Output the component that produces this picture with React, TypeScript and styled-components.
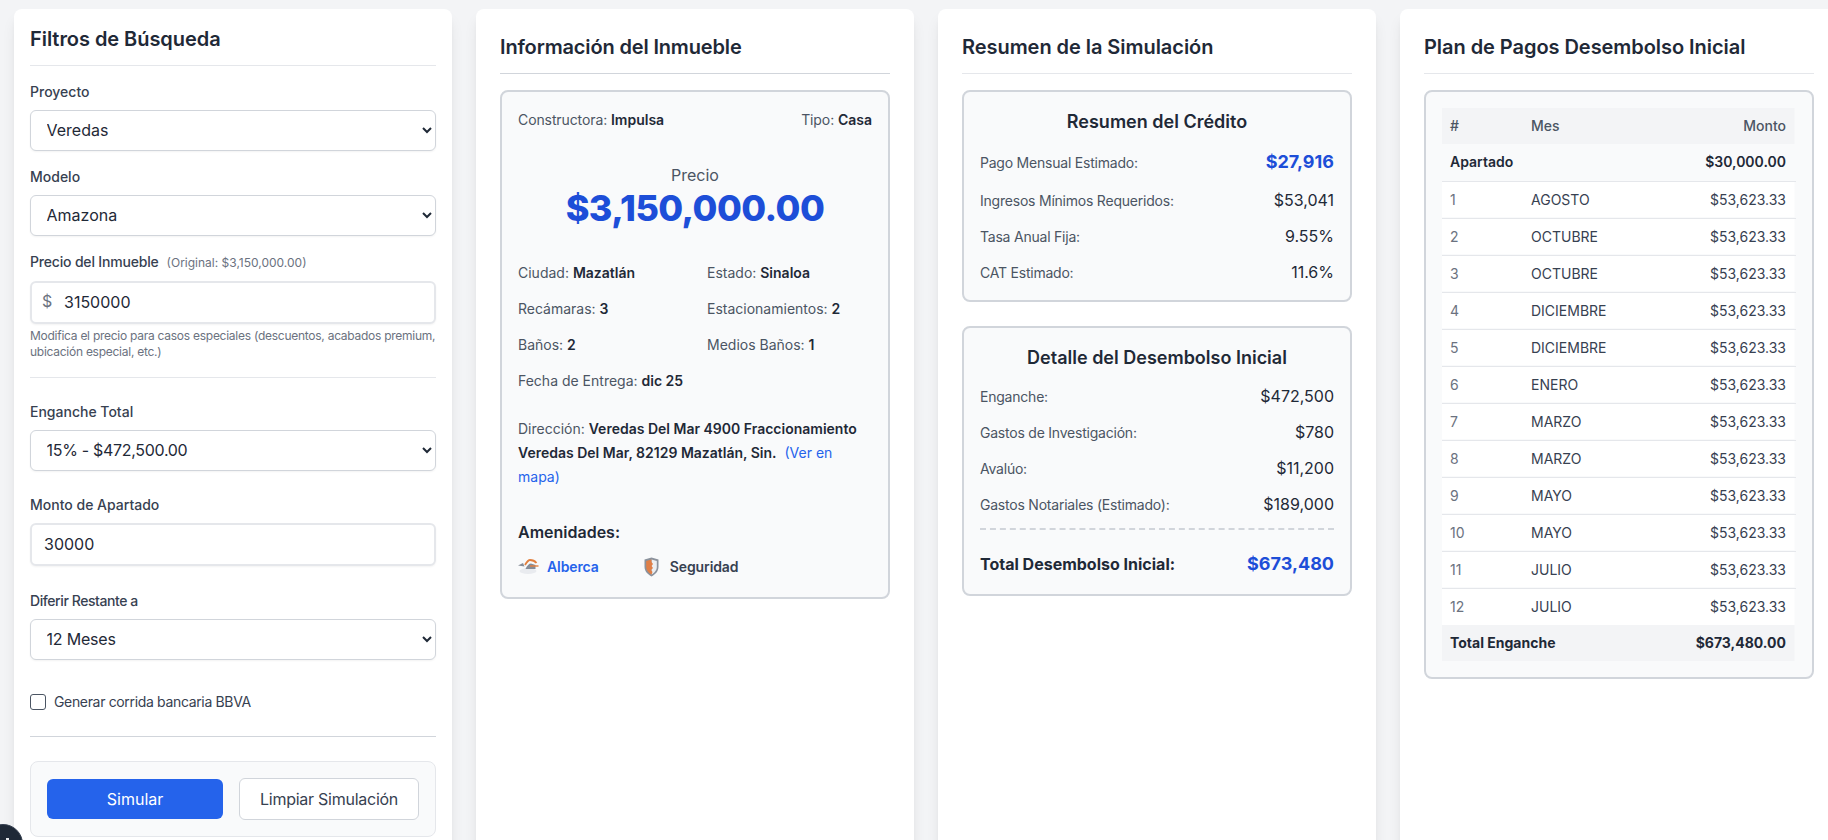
import { createGlobalStyle, styled } from "styled-components";

const GlobalStyle = createGlobalStyle`
  html, body {
    margin: 0;
    height: 100%;
    overflow: hidden;
    background: #f3f4f6;
    font-family: Inter, "Liberation Sans", sans-serif;
    color: #1f2937;
  }
  * {
    box-sizing: border-box;
  }
`;

const Page = styled.div`
  display: grid;
  grid-template-columns: repeat(4, 438px);
  gap: 24px;
  padding: 9px 0 0 14px;
`;

const Card = styled.section<{ $pad: number }>`
  background: #fff;
  border-radius: 8px;
  padding: ${(p) => p.$pad}px;
  box-shadow: 0 10px 15px -3px rgba(0, 0, 0, 0.1), 0 4px 6px -4px rgba(0, 0, 0, 0.1);
  height: 1000px;
`;

const CardTitle = styled.h2<{ $dark?: boolean; $track?: number }>`
  margin: 0 0 16px;
  font-size: 20px;
  line-height: 28px;
  font-weight: 600;
  letter-spacing: ${(p) => p.$track ?? -0.05}px;
  color: #1f2937;
  border-bottom: 1px solid ${(p) => (p.$dark ? "#d1d5db" : "#e5e7eb")};
  padding-bottom: 12px;
`;

const Field = styled.div<{ $mb: number }>`
  margin-bottom: ${(p) => p.$mb}px;
`;

const Label = styled.label<{ $track?: number }>`
  display: block;
  font-size: 14px;
  line-height: 20px;
  font-weight: 500;
  letter-spacing: ${(p) => p.$track ?? 0}px;
  color: #374151;
  margin-bottom: 8px;
`;

const LabelNote = styled.span`
  font-size: 12px;
  font-weight: 400;
  letter-spacing: 0;
  color: #6b7280;
  margin-left: 8px;
`;

const Select = styled.select<{ $track?: number }>`
  display: block;
  width: 100%;
  height: 41px;
  padding: 0 11.5px 1px;
  font-family: inherit;
  font-size: 16px;
  letter-spacing: ${(p) => p.$track ?? 0}px;
  color: #1f2937;
  background: #fff;
  border: 1px solid #d1d5db;
  border-radius: 6px;
  box-shadow: 0 1px 2px rgba(0, 0, 0, 0.05);
`;

const InputWrap = styled.div`
  position: relative;
`;

const Prefix = styled.span`
  position: absolute;
  left: 12px;
  top: 10px;
  font-size: 16px;
  line-height: 20px;
  color: #6b7280;
`;

const Input = styled.input<{ $hasPrefix?: boolean }>`
  display: block;
  width: 100%;
  height: 43px;
  padding: 0 12px 2px ${(p) => (p.$hasPrefix ? "32px" : "12px")};
  font-family: inherit;
  font-size: 16px;
  color: #1f2937;
  background: #fff;
  border: 2px solid #e5e7eb;
  border-radius: 6px;
  box-shadow: 0 1px 2px rgba(0, 0, 0, 0.05);
`;

const Help = styled.p`
  margin: 4px 0 0;
  font-size: 12px;
  line-height: 16px;
  letter-spacing: -0.26px;
  color: #6b7280;
`;

const Divider = styled.hr<{ $mt: number; $mb: number; $dark?: boolean }>`
  border: 0;
  border-top: 1px solid ${(p) => (p.$dark ? "#d1d5db" : "#e5e7eb")};
  margin: ${(p) => p.$mt}px 0 ${(p) => p.$mb}px;
`;

const CheckRow = styled.label`
  display: flex;
  align-items: center;
  gap: 8px;
  font-size: 14px;
  line-height: 20px;
  letter-spacing: -0.34px;
  color: #374151;
`;

const Checkbox = styled.span`
  width: 16px;
  height: 16px;
  border: 1px solid #4b5563;
  border-radius: 3px;
  background: #fff;
`;

const ActionBox = styled.div`
  display: flex;
  align-items: center;
  gap: 16px;
  background: #f9fafb;
  border: 1px solid #e5e7eb;
  border-radius: 8px;
  padding: 16px;
`;

const PrimaryButton = styled.button`
  flex: 177 1 0;
  height: 40px;
  border: 0;
  border-radius: 6px;
  background: #2563eb;
  color: #fff;
  font-family: inherit;
  font-size: 16px;
  font-weight: 400;
`;

const GhostButton = styled.button`
  flex: 179 1 0;
  height: 42px;
  border: 1px solid #d1d5db;
  border-radius: 6px;
  background: #fff;
  color: #374151;
  font-family: inherit;
  font-size: 16px;
  font-weight: 400;
  letter-spacing: -0.26px;
`;

const Panel = styled.div<{ $mb?: number }>`
  background: #f9fafb;
  border: 2px solid #d1d5db;
  border-radius: 8px;
  padding: 16px;
  margin-bottom: ${(p) => p.$mb ?? 0}px;
`;

const TopRow = styled.div`
  display: flex;
  justify-content: space-between;
  font-size: 14px;
  line-height: 24px;
  letter-spacing: -0.1px;
  color: #4b5563;
  margin-bottom: 31px;
`;

const Strong = styled.strong`
  font-weight: 600;
  letter-spacing: 0;
  color: #1f2937;
`;

const PriceBlock = styled.div`
  text-align: center;
  margin-bottom: 35px;
`;

const PriceLabel = styled.div`
  font-size: 16px;
  line-height: 24px;
  color: #4b5563;
  margin-bottom: 1px;
`;

const PriceValue = styled.div`
  font-size: 36px;
  line-height: 40px;
  font-weight: 800;
  letter-spacing: -0.55px;
  color: #1d4ed8;
`;

const InfoGrid = styled.div`
  display: grid;
  grid-template-columns: 1fr 1fr;
  gap: 16px 24px;
  font-size: 14px;
  line-height: 20px;
  color: #4b5563;
  margin-bottom: 26px;
`;

const FullCell = styled.div`
  grid-column: 1 / -1;
`;

const Address = styled.p`
  margin: 0 0 31px;
  font-size: 14px;
  line-height: 24px;
  color: #4b5563;
`;

const MapLink = styled.a`
  color: #2563eb;
  margin-left: 4px;
`;

const AmenitiesTitle = styled.h4`
  margin: 0 0 8px;
  font-size: 16px;
  line-height: 24px;
  font-weight: 600;
  color: #1f2937;
`;

const Amenities = styled.div`
  display: flex;
  align-items: center;
  gap: 45px;
  height: 29px;
`;

const Amenity = styled.div<{ $link?: boolean }>`
  display: flex;
  align-items: center;
  gap: ${(p) => (p.$link ? 8 : 11)}px;
  font-size: 14px;
  line-height: 20px;
  font-weight: 600;
  letter-spacing: -0.1px;
  color: ${(p) => (p.$link ? "#2563eb" : "#374151")};
`;

const PanelTitle = styled.h3`
  margin: 0 0 12px;
  text-align: center;
  font-size: 18px;
  line-height: 28px;
  font-weight: 600;
  color: #1f2937;
`;

const RowList = styled.div`
  display: flex;
  flex-direction: column;
  gap: 12px;
`;

const SummaryRow = styled.div`
  display: flex;
  justify-content: space-between;
  align-items: center;
  font-size: 14px;
  letter-spacing: -0.22px;
  color: #4b5563;
`;

const SummaryValue = styled.span<{ $blue?: boolean }>`
  font-size: ${(p) => (p.$blue ? "18px" : "16px")};
  line-height: ${(p) => (p.$blue ? "28px" : "24px")};
  font-weight: ${(p) => (p.$blue ? 700 : 400)};
  letter-spacing: 0;
  color: ${(p) => (p.$blue ? "#1d4ed8" : "#1f2937")};
`;

const Dashed = styled.div`
  border-top: 2px dashed #d1d5db;
  margin: 12px 0 20px;
`;

const TotalRow = styled.div`
  display: flex;
  justify-content: space-between;
  align-items: center;
  font-size: 16px;
  line-height: 28px;
  font-weight: 700;
  color: #1f2937;
`;

const TotalValue = styled.span`
  font-size: 18px;
  color: #1d4ed8;
`;

const Table = styled.table`
  width: 354px;
  border-collapse: collapse;
  font-size: 14px;
  line-height: 20px;
  table-layout: fixed;
`;

const fill = (color: string) =>
  `background: linear-gradient(${color}, ${color}) left top / 352px 100% no-repeat;`;

const HeadRow = styled.tr`
  ${fill("#f3f4f6")}
`;

const Th = styled.th<{ $w?: number; $right?: boolean }>`
  width: ${(p) => (p.$w ? `${p.$w}px` : "auto")};
  height: 36px;
  padding: 0 ${(p) => (p.$right ? "10px" : "8px")} 0 8px;
  text-align: ${(p) => (p.$right ? "right" : "left")};
  font-weight: 500;
  color: #4b5563;
`;

const DepositRow = styled.tr`
  border-bottom: 1px solid #e5e7eb;
  font-weight: 600;
  color: #1f2937;
`;

const MonthRow = styled.tr<{ $last?: boolean }>`
  border-bottom: ${(p) => (p.$last ? "0" : "1px solid #e5e7eb")};
  ${fill("#fff")}
  color: #374151;
`;

const Td = styled.td<{ $right?: boolean; $muted?: boolean }>`
  height: 37px;
  padding: 0 ${(p) => (p.$right ? "10px" : "8px")} 0 8px;
  text-align: ${(p) => (p.$right ? "right" : "left")};
  color: ${(p) => (p.$muted ? "#6b7280" : "inherit")};
`;

const FootRow = styled.tr`
  ${fill("#f3f4f6")}
  font-weight: 700;
  color: #1f2937;
  td {
    height: 36px;
  }
`;

const DevBadge = styled.div`
  position: fixed;
  left: -17px;
  bottom: -24px;
  width: 40px;
  height: 40px;
  border-radius: 50%;
  background: #1f2937;
  border: 1px solid #374151;
  &::after {
    content: "";
    position: absolute;
    left: 22px;
    top: 13px;
    width: 3px;
    height: 6px;
    background: #e5e7eb;
  }
`;

const PoolIcon = () => (
  <svg width="21" height="16" viewBox="0 0 21 16" aria-hidden="true">
    <ellipse cx="10" cy="12" rx="8.5" ry="3" fill="#e9ebef" />
    <path d="M0 6.5 L5 4 L6.5 7.5 Z" fill="#868d98" />
    <path d="M7 6 Q10 1 12 1 Q16 1 18.5 4" fill="none" stroke="#e2803f" strokeWidth="1.8" />
    <path d="M7.5 10 Q10 4.5 13 4.5 L17.5 6 L17.5 10 Z" fill="#868d98" />
    <path d="M12 7 H20.5" stroke="#e2803f" strokeWidth="1.4" />
  </svg>
);

const ShieldIcon = () => (
  <svg width="15" height="20" viewBox="0 0 15 20" aria-hidden="true">
    <path d="M7.5 0.5 L14.5 2.5 V10 C14.5 14.5 11 17.5 7.5 19.5 C4 17.5 0.5 14.5 0.5 10 V2.5 Z" fill="#8b929c" />
    <path d="M7.5 2.5 L12.8 4 V10 C12.8 13.5 10 16 7.5 17.5 Z" fill="#eceef1" />
    <path d="M7.5 2.5 L2.2 4 V10 C2.2 13.5 5 16 7.5 17.5 L8.5 15 L7 13 L9 11 L7.5 9 L9 7 L7.5 5 Z" fill="#e07f47" />
  </svg>
);

const months = [
  "AGOSTO",
  "OCTUBRE",
  "OCTUBRE",
  "DICIEMBRE",
  "DICIEMBRE",
  "ENERO",
  "MARZO",
  "MARZO",
  "MAYO",
  "MAYO",
  "JULIO",
  "JULIO",
];

const credit = [
  ["Ingresos Mínimos Requeridos:", "$53,041"],
  ["Tasa Anual Fija:", "9.55%"],
  ["CAT Estimado:", "11.6%"],
];

const costs = [
  ["Enganche:", "$472,500"],
  ["Gastos de Investigación:", "$780"],
  ["Avalúo:", "$11,200"],
  ["Gastos Notariales (Estimado):", "$189,000"],
];

const App = () => {
  return (
    <>
      <GlobalStyle />
      <Page>
        <Card $pad={16}>
          <CardTitle>Filtros de Búsqueda</CardTitle>
          <Field $mb={16}>
            <Label>Proyecto</Label>
            <Select defaultValue="Veredas">
              <option>Veredas</option>
            </Select>
          </Field>
          <Field $mb={16}>
            <Label>Modelo</Label>
            <Select defaultValue="Amazona">
              <option>Amazona</option>
            </Select>
          </Field>
          <Field $mb={0}>
            <Label $track={-0.18}>
              Precio del Inmueble
              <LabelNote>(Original: $3,150,000.00)</LabelNote>
            </Label>
            <InputWrap>
              <Prefix>$</Prefix>
              <Input $hasPrefix defaultValue="3150000" />
            </InputWrap>
            <Help>
              Modifica el precio para casos especiales (descuentos, acabados premium,
              ubicación especial, etc.)
            </Help>
          </Field>
          <Divider $mt={17} $mb={24} />
          <Field $mb={24}>
            <Label>Enganche Total</Label>
            <Select defaultValue="15" $track={-0.3}>
              <option value="15">15% - $472,500.00</option>
            </Select>
          </Field>
          <Field $mb={25}>
            <Label>Monto de Apartado</Label>
            <Input defaultValue="30000" />
          </Field>
          <Field $mb={32}>
            <Label $track={-0.42}>Diferir Restante a</Label>
            <Select defaultValue="12" $track={-0.2}>
              <option value="12">12 Meses</option>
            </Select>
          </Field>
          <CheckRow>
            <Checkbox />
            Generar corrida bancaria BBVA
          </CheckRow>
          <Divider $mt={24} $mb={24} $dark />
          <ActionBox>
            <PrimaryButton>Simular</PrimaryButton>
            <GhostButton>Limpiar Simulación</GhostButton>
          </ActionBox>
        </Card>

        <Card $pad={24}>
          <CardTitle $dark $track={-0.15}>
            Información del Inmueble
          </CardTitle>
          <Panel>
            <TopRow>
              <span>
                Constructora: <Strong>Impulsa</Strong>
              </span>
              <span>
                Tipo: <Strong>Casa</Strong>
              </span>
            </TopRow>
            <PriceBlock>
              <PriceLabel>Precio</PriceLabel>
              <PriceValue>$3,150,000.00</PriceValue>
            </PriceBlock>
            <InfoGrid>
              <div>
                Ciudad: <Strong>Mazatlán</Strong>
              </div>
              <div>
                Estado: <Strong>Sinaloa</Strong>
              </div>
              <div>
                Recámaras: <Strong>3</Strong>
              </div>
              <div>
                Estacionamientos: <Strong>2</Strong>
              </div>
              <div>
                Baños: <Strong>2</Strong>
              </div>
              <div>
                Medios Baños: <Strong>1</Strong>
              </div>
              <FullCell>
                Fecha de Entrega: <Strong>dic 25</Strong>
              </FullCell>
            </InfoGrid>
            <Address>
              Dirección: <Strong>Veredas Del Mar 4900 Fraccionamiento Veredas Del Mar, 82129 Mazatlán, Sin.</Strong>{" "}
              <MapLink>(Ver en mapa)</MapLink>
            </Address>
            <AmenitiesTitle>Amenidades:</AmenitiesTitle>
            <Amenities>
              <Amenity $link>
                <PoolIcon />
                Alberca
              </Amenity>
              <Amenity>
                <ShieldIcon />
                Seguridad
              </Amenity>
            </Amenities>
          </Panel>
        </Card>

        <Card $pad={24}>
          <CardTitle>Resumen de la Simulación</CardTitle>
          <Panel $mb={24}>
            <PanelTitle>Resumen del Crédito</PanelTitle>
            <RowList>
              <SummaryRow>
                Pago Mensual Estimado:
                <SummaryValue $blue>$27,916</SummaryValue>
              </SummaryRow>
              {credit.map(([label, value]) => (
                <SummaryRow key={label}>
                  {label}
                  <SummaryValue>{value}</SummaryValue>
                </SummaryRow>
              ))}
            </RowList>
          </Panel>
          <Panel>
            <PanelTitle>Detalle del Desembolso Inicial</PanelTitle>
            <RowList>
              {costs.map(([label, value]) => (
                <SummaryRow key={label}>
                  {label}
                  <SummaryValue>{value}</SummaryValue>
                </SummaryRow>
              ))}
            </RowList>
            <Dashed />
            <TotalRow>
              Total Desembolso Inicial:
              <TotalValue>$673,480</TotalValue>
            </TotalRow>
          </Panel>
        </Card>

        <Card $pad={24}>
          <CardTitle>Plan de Pagos Desembolso Inicial</CardTitle>
          <Panel>
            <Table>
              <thead>
                <HeadRow>
                  <Th $w={81}>#</Th>
                  <Th>Mes</Th>
                  <Th $right>Monto</Th>
                </HeadRow>
              </thead>
              <tbody>
                <DepositRow>
                  <Td colSpan={2}>Apartado</Td>
                  <Td $right>$30,000.00</Td>
                </DepositRow>
                {months.map((month, i) => (
                  <MonthRow key={i} $last={i === months.length - 1}>
                    <Td $muted>{i + 1}</Td>
                    <Td>{month}</Td>
                    <Td $right>$53,623.33</Td>
                  </MonthRow>
                ))}
              </tbody>
              <tfoot>
                <FootRow>
                  <Td colSpan={2}>Total Enganche</Td>
                  <Td $right>$673,480.00</Td>
                </FootRow>
              </tfoot>
            </Table>
          </Panel>
        </Card>
      </Page>
      <DevBadge />
    </>
  );
};

export default App;
